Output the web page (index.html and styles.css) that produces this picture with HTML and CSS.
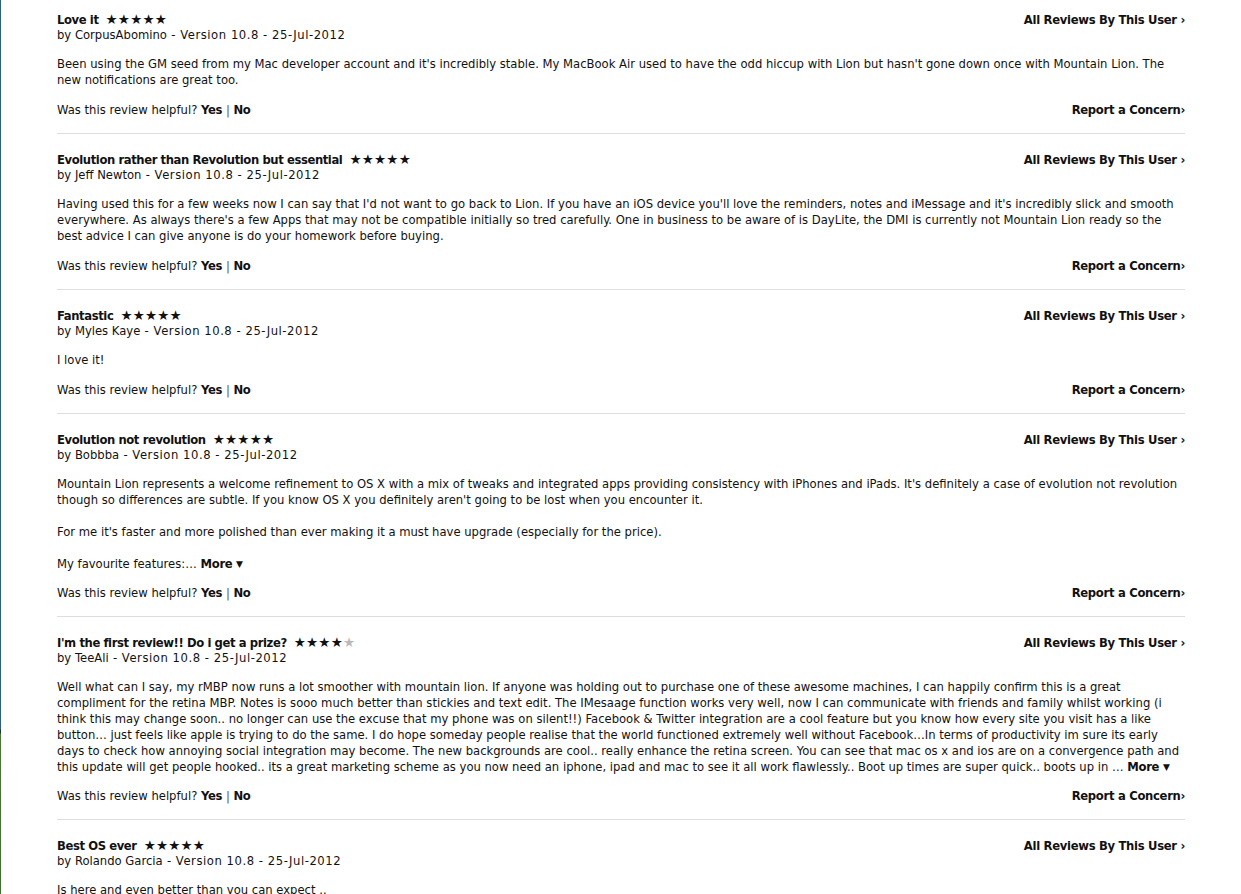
FILE: index.html
```html
<!DOCTYPE html>
<html>
<head>
<meta charset="utf-8">
<title>Customer Reviews</title>
<link rel="stylesheet" href="styles.css">
</head>
<body>
<div class="page">
  <div class="reviews">

    <div class="review">
      <div class="head">
        <div class="who">
          <div class="title"><span class="name">Love it</span><span class="stars">★★★★★</span></div>
          <div class="by">by CorpusAbomino<span class="ver"> - Version 10.8 - 25-Jul-2012</span></div>
        </div>
        <a class="all" href="#">All Reviews By This User <span class="chev">›</span></a>
      </div>
      <div class="text">
        <p>Been using the GM seed from my Mac developer account and it's incredibly stable. My MacBook Air used to have the odd hiccup with Lion but hasn't gone down once with Mountain Lion. The new notifications are great too.</p>
      </div>
      <div class="foot">
        <span class="helpful">Was this review helpful? <b>Yes</b> <span class="bar">|</span> <b>No</b></span>
        <a class="concern" href="#">Report a Concern<span class="chev">›</span></a>
      </div>
    </div>

    <div class="review">
      <div class="head">
        <div class="who">
          <div class="title"><span class="name">Evolution rather than Revolution but essential</span><span class="stars">★★★★★</span></div>
          <div class="by">by Jeff Newton<span class="ver"> - Version 10.8 - 25-Jul-2012</span></div>
        </div>
        <a class="all" href="#">All Reviews By This User <span class="chev">›</span></a>
      </div>
      <div class="text">
        <p>Having used this for a few weeks now I can say that I'd not want to go back to Lion. If you have an iOS device you'll love the reminders, notes and iMessage and it's incredibly slick and smooth everywhere. As always there's a few Apps that may not be compatible initially so tred carefully. One in business to be aware of is DayLite, the DMI is currently not Mountain Lion ready so the best advice I can give anyone is do your homework before buying.</p>
      </div>
      <div class="foot">
        <span class="helpful">Was this review helpful? <b>Yes</b> <span class="bar">|</span> <b>No</b></span>
        <a class="concern" href="#">Report a Concern<span class="chev">›</span></a>
      </div>
    </div>

    <div class="review">
      <div class="head">
        <div class="who">
          <div class="title"><span class="name">Fantastic</span><span class="stars">★★★★★</span></div>
          <div class="by">by Myles Kaye<span class="ver"> - Version 10.8 - 25-Jul-2012</span></div>
        </div>
        <a class="all" href="#">All Reviews By This User <span class="chev">›</span></a>
      </div>
      <div class="text">
        <p>I love it!</p>
      </div>
      <div class="foot">
        <span class="helpful">Was this review helpful? <b>Yes</b> <span class="bar">|</span> <b>No</b></span>
        <a class="concern" href="#">Report a Concern<span class="chev">›</span></a>
      </div>
    </div>

    <div class="review has-more">
      <div class="head">
        <div class="who">
          <div class="title"><span class="name">Evolution not revolution</span><span class="stars">★★★★★</span></div>
          <div class="by">by Bobbba<span class="ver"> - Version 10.8 - 25-Jul-2012</span></div>
        </div>
        <a class="all" href="#">All Reviews By This User <span class="chev">›</span></a>
      </div>
      <div class="text">
        <p>Mountain Lion represents a welcome refinement to OS X with a mix of tweaks and integrated apps providing consistency with iPhones and iPads. It's definitely a case of evolution not revolution though so differences are subtle. If you know OS X you definitely aren't going to be lost when you encounter it.</p>
        <p>For me it's faster and more polished than ever making it a must have upgrade (especially for the price).</p>
        <p>My favourite features:… <a class="more" href="#">More <span class="tri">▼</span></a></p>
      </div>
      <div class="foot">
        <span class="helpful">Was this review helpful? <b>Yes</b> <span class="bar">|</span> <b>No</b></span>
        <a class="concern" href="#">Report a Concern<span class="chev">›</span></a>
      </div>
    </div>

    <div class="review has-more">
      <div class="head">
        <div class="who">
          <div class="title"><span class="name">I'm the first review!! Do i get a prize?</span><span class="stars">★★★★<span class="off">★</span></span></div>
          <div class="by">by TeeAli<span class="ver"> - Version 10.8 - 25-Jul-2012</span></div>
        </div>
        <a class="all" href="#">All Reviews By This User <span class="chev">›</span></a>
      </div>
      <div class="text">
        <p>Well what can I say, my rMBP now runs a lot smoother with mountain lion. If anyone was holding out to purchase one of these awesome machines, I can happily confirm this is a great compliment for the retina MBP. Notes is sooo much better than stickies and text edit. The IMesaage function works very well, now I can communicate with friends and family whilst working (i think this may change soon.. no longer can use the excuse that my phone was on silent!!) Facebook &amp; Twitter integration are a cool feature but you know how every site you visit has a like button… just feels like apple is trying to do the same. I do hope someday people realise that the world functioned extremely well without Facebook…In terms of productivity im sure its early days to check how annoying social integration may become. The new backgrounds are cool.. really enhance the retina screen. You can see that mac os x and ios are on a convergence path and this update will get people hooked.. its a great marketing scheme as you now need an iphone, ipad and mac to see it all work flawlessly.. Boot up times are super quick.. boots up in … <a class="more" href="#">More <span class="tri">▼</span></a></p>
      </div>
      <div class="foot">
        <span class="helpful">Was this review helpful? <b>Yes</b> <span class="bar">|</span> <b>No</b></span>
        <a class="concern" href="#">Report a Concern<span class="chev">›</span></a>
      </div>
    </div>

    <div class="review">
      <div class="head">
        <div class="who">
          <div class="title"><span class="name">Best OS ever</span><span class="stars">★★★★★</span></div>
          <div class="by">by Rolando Garcia<span class="ver"> - Version 10.8 - 25-Jul-2012</span></div>
        </div>
        <a class="all" href="#">All Reviews By This User <span class="chev">›</span></a>
      </div>
      <div class="text">
        <p>Is here and even better than you can expect ..</p>
      </div>
      <div class="foot">
        <span class="helpful">Was this review helpful? <b>Yes</b> <span class="bar">|</span> <b>No</b></span>
        <a class="concern" href="#">Report a Concern<span class="chev">›</span></a>
      </div>
    </div>

  </div>
</div>
</body>
</html>
```
FILE: styles.css
```css
html, body {
  margin: 0;
  padding: 0;
  background: #fff;
}

body {
  font-family: "DejaVu Sans", sans-serif;
  font-size: 11.6px;
  line-height: 16px;
  color: #111;
}

.page {
  min-height: 100vh;
  padding-left: 57px;
  background: linear-gradient(to bottom, #2d6086 0, #2d6086 729px, #24303a 730px, #24303a 733px, #4a7a36 734px, #3f6a2e 100%) no-repeat left top / 1px 100%;
}

.reviews {
  width: 1128px;
  padding-top: 12px;
}

.review {
  padding: 18px 0 15px;
  border-bottom: 1px solid #dedede;
}

.review:first-child {
  padding-top: 0;
}

.head {
  display: flex;
  justify-content: space-between;
  align-items: flex-start;
}

.title {
  height: 16px;
  line-height: 16px;
  white-space: nowrap;
}

.name {
  font-weight: bold;
  letter-spacing: -0.4px;
}

.stars {
  margin-left: 7px;
  font-size: 13.5px;
  line-height: 0;
  letter-spacing: 0.2px;
  color: #111;
}

.stars .off {
  color: #b9b9b9;
}

.by {
  height: 15px;
  line-height: 15px;
}

.ver {
  letter-spacing: 0.55px;
}

a {
  color: #111;
  text-decoration: none;
  font-weight: bold;
  letter-spacing: -0.3px;
}

b {
  letter-spacing: -0.3px;
}

.all {
  line-height: 16px;
}

.text {
  margin-top: 13px;
}

.text p {
  margin: 0 0 16px;
}

.text p:last-child {
  margin-bottom: 0;
}

.tri {
  font-size: 9px;
  letter-spacing: 0;
  position: relative;
  top: -1px;
}

.foot {
  margin-top: 14px;
  display: flex;
  justify-content: space-between;
}

.has-more .foot {
  margin-top: 12px;
}

.bar {
  color: #555;
}
```
